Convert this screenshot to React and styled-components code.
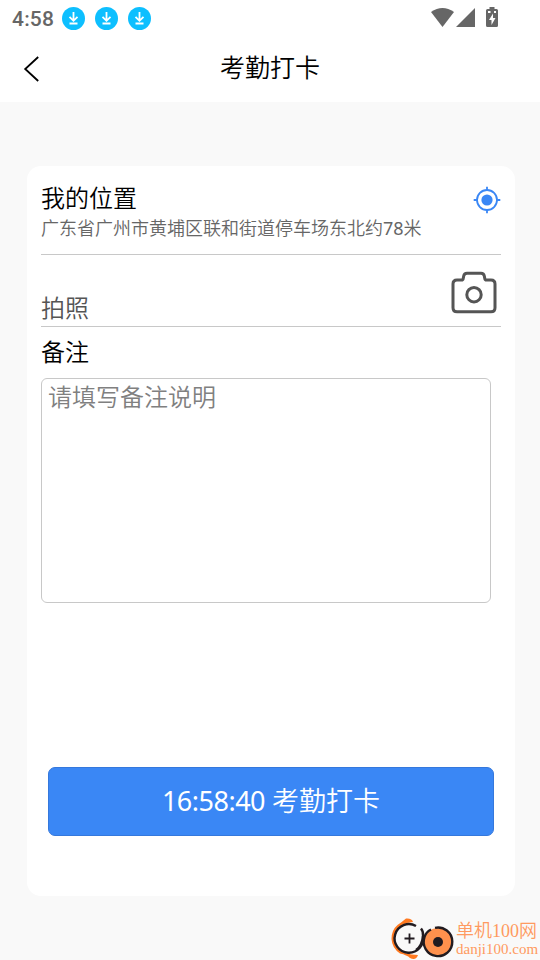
import React, { useState } from 'react';
import styled, { createGlobalStyle } from 'styled-components';

const GlobalStyle = createGlobalStyle`
  * {
    box-sizing: border-box;
  }

  body {
    margin: 0;
    background: #f9f9f9;
    font-family: 'Noto Sans', 'Noto Sans CJK SC', sans-serif;
    font-weight: 350;
    overflow: hidden;
  }
`;

// Styled Components
const Page = styled.div`
  display: flex;
  flex-direction: column;
  position: relative;
  width: 540px;
  height: 960px;
  background: #f9f9f9;
`;

const StatusBar = styled.div`
  display: flex;
  align-items: center;
  height: 36px;
  padding: 0 41px 0 12px;
  background: #fff;
`;

const Clock = styled.span`
  width: 50px;
  font-family: Roboto, sans-serif;
  font-size: 21px;
  font-weight: 500;
  letter-spacing: 0.2px;
  line-height: 36px;
  padding-top: 2px;
  color: #666;
`;

const Downloads = styled.div`
  display: flex;
  flex: 1;
  gap: 10px;
  padding-top: 1px;
`;

const StatusIcons = styled.svg`
  display: block;
  width: 72px;
  height: 24px;
`;

const Header = styled.header`
  display: grid;
  grid-template-columns: 60px 1fr 60px;
  align-items: center;
  height: 66px;
  background: #fff;
`;

const BackButton = styled.button`
  display: flex;
  padding: 0 0 0 20px;
  border: none;
  background: none;
  cursor: pointer;
`;

const Title = styled.h1`
  margin: 0;
  padding-bottom: 4px;
  font-size: 25px;
  font-weight: 350;
  line-height: 36px;
  text-align: center;
  color: #000;
`;

const Card = styled.main`
  display: flex;
  flex-direction: column;
  width: 488px;
  height: 730px;
  margin: 64px 0 0 27px;
  padding: 14px;
  border-radius: 14px;
  background: #fff;
`;

const LocationRow = styled.section`
  display: flex;
  justify-content: space-between;
  height: 75px;
  border-bottom: 1px solid #c8c8c8;
`;

const Label = styled.div`
  font-size: 24px;
  line-height: 36px;
  color: ${props => props.$muted ? '#555' : '#000'};
`;

const Address = styled.div`
  font-size: 18px;
  line-height: 24px;
  color: #666;
`;

const Digits = styled.span`
  font-weight: 400;
  letter-spacing: ${props => props.$tight ? '-0.5px' : 'normal'};
`;

const LocateButton = styled.button`
  display: flex;
  align-self: flex-start;
  margin-top: 6px;
  padding: 0;
  border: none;
  background: none;
  cursor: pointer;
`;

const PhotoRow = styled.section`
  display: flex;
  align-items: flex-end;
  justify-content: space-between;
  height: 72px;
  padding-right: 3px;
  border-bottom: 1px solid #c8c8c8;
`;

const CameraIcon = styled.svg`
  display: block;
  margin-bottom: 11px;
`;

const NoteLabel = styled(Label)`
  padding-top: 7px;
  height: 51px;
`;

const NoteInput = styled.textarea`
  display: block;
  width: 450px;
  height: 225px;
  padding: 0 6px;
  border: 1px solid #c8c8c8;
  border-radius: 6px;
  outline: none;
  resize: none;
  font-family: inherit;
  font-size: 24px;
  font-weight: 350;
  line-height: 36px;
  color: #333;

  &::placeholder {
    color: #808080;
    opacity: 1;
  }
`;

const SubmitButton = styled.button`
  width: 446px;
  height: 69px;
  margin: 164px 0 0 7px;
  padding: 0 0 1px;
  border: 1px solid #3578dc;
  border-radius: 7px;
  background: #3a87f5;
  color: #fff;
  font-family: inherit;
  font-size: 27px;
  font-weight: 350;
  line-height: 40px;
  cursor: pointer;
`;

const Watermark = styled.div`
  position: absolute;
  right: 1px;
  bottom: 0;
  display: flex;
  gap: 1px;
`;

const WatermarkText = styled.div`
  width: 83px;
  padding-top: 3px;
  font-family: 'Liberation Serif', 'Noto Sans CJK SC', serif;
  color: #ff9a60;
  white-space: nowrap;
`;

const SiteName = styled.div`
  font-size: 18px;
  line-height: 22px;
`;

const SiteUrl = styled.div`
  font-size: 15px;
  line-height: 15px;
`;

const DownloadIcon = () => (
  <svg width="23" height="23" viewBox="0 0 23 23">
    <circle cx="11.5" cy="11.5" r="11.5" fill="#0dbfff" />
    <path d="M11.5 5v8.5M7.5 9.8l4 4 4-4M7.5 16.5h8" fill="none" stroke="#fff" strokeWidth="1.8" />
  </svg>
);

const App = () => {
  const [note, setNote] = useState('');

  return (
    <>
      <GlobalStyle />
      <Page>
        <StatusBar>
          <Clock>4:58</Clock>
          <Downloads>
            <DownloadIcon />
            <DownloadIcon />
            <DownloadIcon />
          </Downloads>
          <StatusIcons viewBox="0 0 72 24" fill="#666">
            <path d="M4 6Q15.5-2 27 6L15.500 21Z" />
            <path d="M48 2V21H29Z" />
            <path d="M62.5 1h5v2h2q1.500 0 1.500 1.500v15q0 1.500-1.500 1.500h-9q-1.500 0-1.500-1.500v-15q0-1.500 1.500-1.500h2Z" />
            <path d="M66 7.5l-4 6.500h2.500v5l4-7H66ZM61 5h2.500v2H61ZM67 5h2v2h-2Z" fill="#fff" />
          </StatusIcons>
        </StatusBar>

        <Header>
          <BackButton aria-label="返回">
            <svg width="24" height="28" viewBox="0 0 24 28" fill="none" stroke="#000" strokeWidth="1.8">
              <path d="M18.200 2L5.200 14l13 12" />
            </svg>
          </BackButton>
          <Title>考勤打卡</Title>
        </Header>

        <Card>
          <LocationRow>
            <div>
              <Label>我的位置</Label>
              <Address>广东省广州市黄埔区联和街道停车场东北约<Digits>78</Digits>米</Address>
            </div>
            <LocateButton aria-label="定位">
              <svg width="28" height="28" viewBox="0 0 28 28" fill="none" stroke="#3a87f5" strokeWidth="1.8">
                <circle cx="14" cy="14" r="10" />
                <circle cx="14" cy="14" r="5.6" fill="#3a87f5" stroke="none" />
                <path d="M14 .7v4M14 23.300v4M.7 14h4M23.300 14h4" />
              </svg>
            </LocateButton>
          </LocationRow>

          <PhotoRow>
            <Label $muted>拍照</Label>
            <CameraIcon width="48" height="45" viewBox="0 0 48 45" fill="none" stroke="#555" strokeWidth="3" strokeLinejoin="round">
              <path d="M7 10h4.500q1.500 0 1.700-1.500l.5-2.500q.5-2.800 3.300-2.800h14q2.800 0 3.300 2.800l.5 2.500q.2 1.500 1.700 1.500H41q4 0 4 4v23.800q0 4-4 4H7q-4 0-4-4V14q0-4 4-4Z" />
              <circle cx="24" cy="24.7" r="7.2" />
            </CameraIcon>
          </PhotoRow>

          <NoteLabel>备注</NoteLabel>
          <NoteInput
            placeholder="请填写备注说明"
            value={note}
            onChange={(e) => setNote(e.target.value)}
          />
          <SubmitButton><Digits $tight>16:58:40</Digits> 考勤打卡</SubmitButton>
        </Card>

        <Watermark>
          <svg width="65" height="43" viewBox="0 0 65 43" fill="none">
            <path d="M23 5Q22 1 16 1.500Q12 5 7.500 8Q1.500 13 1.500 22Q2 31 10 36.500Q17 38 20 41Q26 44 28 38Q14 38 8 31Q3 24 5 16Q9 6 23 5Z" fill="#ff7920" />
            <path d="M26 9A14.300 14.300 0 1 0 33 19Q33.500 14.500 31 11.500" stroke="#211b20" strokeWidth="2.4" />
            <path d="M26 33Q32 29 33 19" stroke="#211b20" strokeWidth="2.4" />
            <circle cx="48" cy="25" r="14" fill="#ff914d" />
            <path d="M45 10.800A14.300 14.300 0 1 1 34.500 20Q36 15 41 12.500" stroke="#211b20" strokeWidth="2.4" />
            <circle cx="48" cy="25" r="5" fill="#211b20" />
            <path d="M19.500 16.500v10M14.500 21.500h10" stroke="#211b20" strokeWidth="1.8" />
          </svg>
          <WatermarkText>
            <SiteName>单机100网</SiteName>
            <SiteUrl>danji100.com</SiteUrl>
          </WatermarkText>
        </Watermark>
      </Page>
    </>
  );
};

export default App;
